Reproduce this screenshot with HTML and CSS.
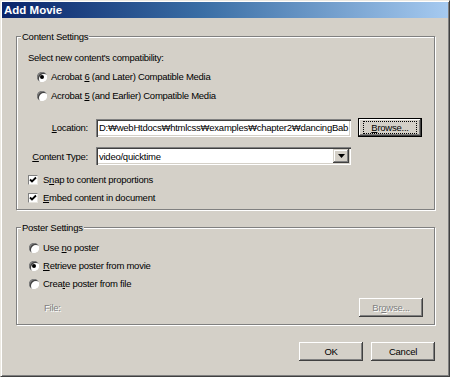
FILE: index.html
```html
<!DOCTYPE html>
<html>
<head>
<meta charset="utf-8">
<title>Add Movie</title>
<link rel="stylesheet" href="styles.css">
</head>
<body>
<div class="window">
  <div class="titlebar"><span class="title">Add Movie</span></div>
  <div class="content">
    <div class="group group-content">
      <span class="legend">Content Settings</span>
      <div class="prompt">Select new content's compatibility:</div>
      <div class="opt opt-media opt-first"><span class="radio checked"></span><span>Acrobat <u>6</u> (and Later) Compatible Media</span></div>
      <div class="opt opt-media"><span class="radio"></span><span>Acrobat <u>5</u> (and Earlier) Compatible Media</span></div>
      <div class="field field-location">
        <span class="flabel"><u>L</u>ocation:</span>
        <div class="textbox"><span class="tb-text">D:₩webHtdocs₩htmlcss₩examples₩chapter2₩dancingBab</span></div>
        <div class="btn btn-default"><span class="focus"><span><u>B</u>rowse...</span></span></div>
      </div>
      <div class="field field-type">
        <span class="flabel"><u>C</u>ontent Type:</span>
        <div class="textbox select">
          <span class="tb-text">video/quicktime</span>
          <span class="drop"><svg width="7" height="4" viewBox="0 0 7 4"><path d="M0 0H7L3.5 4Z" fill="#000"/></svg></span>
        </div>
      </div>
      <div class="opt opt-check opt-check-first"><span class="check"><svg width="8" height="8" viewBox="0 0 8 8"><path d="M1 3.5L3 5.5L7 1.5" fill="none" stroke="#000" stroke-width="1.8"/></svg></span><span>S<u>n</u>ap to content proportions</span></div>
      <div class="opt opt-check"><span class="check"><svg width="8" height="8" viewBox="0 0 8 8"><path d="M1 3.5L3 5.5L7 1.5" fill="none" stroke="#000" stroke-width="1.8"/></svg></span><span><u>E</u>mbed content in document</span></div>
    </div>

    <div class="group group-poster">
      <span class="legend">Poster Settings</span>
      <div class="opt opt-poster opt-poster-first"><span class="radio"></span><span>Use <u>n</u>o poster</span></div>
      <div class="opt opt-poster"><span class="radio checked"></span><span><u>R</u>etrieve poster from movie</span></div>
      <div class="opt opt-poster"><span class="radio"></span><span>Crea<u>t</u>e poster from file</span></div>
      <div class="file-row">
        <span class="disabled file-label">File:</span>
        <div class="btn"><span class="disabled">Br<u>o</u>wse...</span></div>
      </div>
    </div>

    <div class="actions">
      <div class="btn btn-action">OK</div>
      <div class="btn btn-action">Cancel</div>
    </div>
  </div>
</div>
</body>
</html>
```

FILE: styles.css
```css
* { box-sizing: border-box; }
html, body {
  margin: 0;
  padding: 0;
  background: #d4d0c8;
}
body {
  font-family: "Liberation Sans", Arial, sans-serif;
  font-size: 9.5px;
  letter-spacing: -0.25px;
  color: #000;
}
.window {
  width: 450px;
  height: 377px;
  background: #d4d0c8;
  border: 1px solid;
  border-color: #ece9e2 #404040 #404040 #ece9e2;
  box-shadow: inset 1px 1px 0 #ffffff, inset -1px -1px 0 #808080;
  padding: 1px;
  overflow: hidden;
}
.titlebar {
  height: 16px;
  background: linear-gradient(to right, #0a246a 0%, #3a6ea5 45%, #a6caf0 100%);
  display: flex;
  align-items: center;
  padding-left: 2px;
}
.title {
  color: #fff;
  font-weight: bold;
  font-size: 11.5px;
  letter-spacing: 0;
  line-height: 14px;
}
.content {
  padding: 18px 13px 0 14px;
}
.group {
  position: relative;
  border: 1px solid #808080;
  box-shadow: inset 1px 1px 0 #fff, 1px 1px 0 #fff;
  padding: 0 11px;
}
.group-content {
  height: 174px;
  padding-top: 14px;
}
.group-poster {
  height: 98px;
  margin-top: 17px;
  padding-top: 13px;
}
.legend {
  position: absolute;
  top: -7px;
  left: 4px;
  padding: 0 1px;
  background: #d4d0c8;
  line-height: 13px;
}
.prompt {
  line-height: 13px;
}
.opt {
  display: flex;
  align-items: center;
  height: 13px;
  line-height: 13px;
}
.opt-media { margin-top: 6px; padding-left: 9px; gap: 4px; }
.opt-poster { margin-top: 5px; padding-left: 1px; gap: 4px; }
.opt-poster-first { margin-top: 0; }
.opt-check { margin-top: 5px; gap: 5px; }
.opt-check-first { margin-top: 8px; }
.radio {
  position: relative;
  flex: none;
  width: 10px;
  height: 10px;
  border-radius: 50%;
  background: #fff;
  box-shadow: inset 1px 1px 0 #808080, inset 2px 2px 0 #404040, inset -1px -1px 0 #ffffff;
}
.radio.checked::after {
  content: "";
  position: absolute;
  left: 3px;
  top: 3px;
  width: 4px;
  height: 4px;
  border-radius: 50%;
  background: #000;
}
.check {
  flex: none;
  width: 10px;
  height: 10px;
  background: #fff;
  border: 1px solid;
  border-color: #808080 #e8e6e0 #e8e6e0 #808080;
  display: flex;
  align-items: center;
  justify-content: center;
}
.check svg { display: block; }
.field {
  display: flex;
  align-items: center;
}
.field-location { margin-top: 16px; height: 19px; }
.field-type { margin-top: 10px; height: 18px; }
.flabel {
  width: 60px;
  text-align: right;
  margin-right: 8px;
  line-height: 13px;
}
.textbox {
  width: 255px;
  height: 18px;
  background: #fff;
  box-shadow: inset 1px 1px 0 #808080, inset 2px 2px 0 #404040, inset -1px -1px 0 #fff, inset -2px -2px 0 #d4d0c8;
  display: flex;
  align-items: center;
  padding: 0 2px 0 3px;
  overflow: hidden;
  white-space: nowrap;
}
.tb-text {
  flex: 1;
  white-space: nowrap;
  line-height: 13px;
}
.select { padding-right: 2px; }
.drop {
  flex: none;
  width: 16px;
  height: 14px;
  background: #d4d0c8;
  box-shadow: inset -1px -1px 0 #404040, inset 1px 1px 0 #d4d0c8, inset -2px -2px 0 #808080, inset 2px 2px 0 #fff;
  display: flex;
  align-items: center;
  justify-content: center;
}
.drop svg { display: block; }
.btn {
  width: 64px;
  height: 19px;
  background: #d4d0c8;
  box-shadow: inset -1px -1px 0 #404040, inset 1px 1px 0 #fff, inset -2px -2px 0 #808080, inset 2px 2px 0 #d4d0c8;
  display: flex;
  align-items: center;
  justify-content: center;
  line-height: 13px;
}
.field-location .btn { margin-left: 7px; }
.btn-default {
  border: 1px solid #000;
  box-shadow: inset -1px -1px 0 #404040, inset 1px 1px 0 #fff, inset -2px -2px 0 #808080;
}
.focus {
  border: 1px dotted #000;
  width: 54px;
  height: 13px;
  display: flex;
  align-items: center;
  justify-content: center;
  line-height: 11px;
}
.disabled {
  color: #808080;
  text-shadow: 1px 1px 0 #fff;
}
.file-row {
  display: flex;
  align-items: center;
  justify-content: space-between;
  height: 19px;
  margin-top: 8px;
}
.file-label { margin-left: 16px; }
.actions {
  display: flex;
  justify-content: flex-end;
  gap: 8px;
  margin-top: 17px;
}
```
